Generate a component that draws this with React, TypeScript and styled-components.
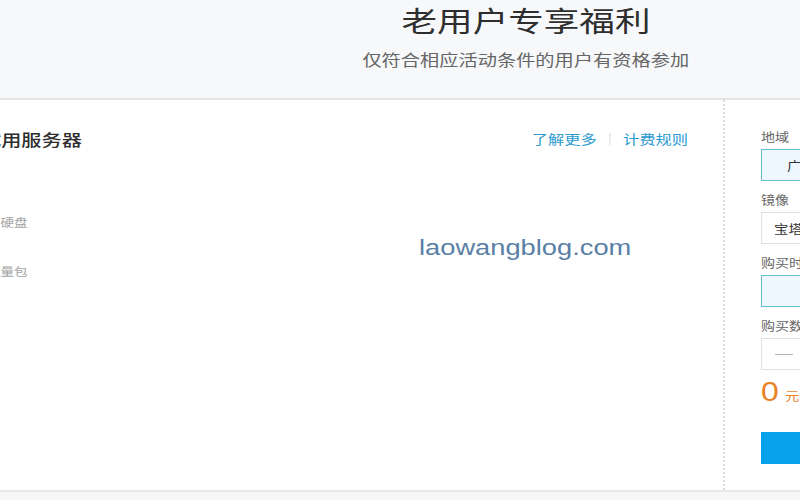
import React from "react";
import styled, { createGlobalStyle } from "styled-components";

const Global = createGlobalStyle`
  html, body { margin: 0; padding: 0; background: #ffffff; }
  body { width: 800px; height: 500px; overflow: hidden; font-family: "Noto Sans CJK SC", "Noto Sans", sans-serif; }
  * { box-sizing: border-box; }
`;

const Page = styled.div`
  width: 800px;
  height: 500px;
  overflow: hidden;
  display: flex;
  flex-direction: column;
  position: relative;
`;

const Header = styled.header`
  height: 100px;
  flex: none;
  background: #f7f8fa;
  border-bottom: 2px solid #e4e4e4;
  display: flex;
  flex-direction: column;
  align-items: center;
  padding-left: 252px;
  padding-top: 1px;
`;

const Title = styled.h1`
  margin: 0;
  font-size: 28px;
  line-height: 38px;
  font-weight: 400;
  color: #2e2e2e;
  transform: scaleX(1.27);
  transform-origin: center;
`;

const Subtitle = styled.p`
  margin: 9px 0 0;
  font-size: 15.5px;
  line-height: 22px;
  color: #666666;
  transform: scaleX(1.24);
  transform-origin: center;
`;

const Main = styled.main`
  flex: 1;
  display: flex;
  min-height: 0;
`;

const LeftPane = styled.section`
  width: 725px;
  flex: none;
  border-right: 2px dotted #dcdcdc;
  padding: 29px 35px 0 0;
  position: relative;
`;

const PaneHead = styled.div`
  display: flex;
  justify-content: space-between;
  align-items: center;
  height: 20px;
`;

const PaneTitle = styled.h2`
  margin: 0 0 0 -19px;
  font-size: 16px;
  line-height: 20px;
  font-weight: 500;
  color: #2e2e2e;
  transform: scaleX(1.26);
  transform-origin: left;
`;

const Links = styled.div`
  display: flex;
  align-items: center;
  gap: 10px;
  transform: scaleX(1.25);
  transform-origin: right;
`;

const LinkText = styled.a`
  font-size: 13px;
  line-height: 20px;
  color: #2a9ad0;
  text-decoration: none;
`;

const Sep = styled.span`
  width: 1px;
  height: 12px;
  background: #e2e2e2;
`;

const ItemList = styled.ul`
  list-style: none;
  margin: 63px 0 0;
  padding: 0;
  display: flex;
  flex-direction: column;
  gap: 29px;
`;

const Item = styled.li`
  margin-left: -13px;
  font-size: 11px;
  line-height: 20px;
  color: #a3a3a3;
  transform: scaleX(1.23);
  transform-origin: left;
`;

const Watermark = styled.div`
  position: absolute;
  left: 419px;
  top: 134px;
  font-family: "Liberation Sans", Arial, sans-serif;
  font-size: 22px;
  line-height: 28px;
  color: #5a7fa6;
  transform: scaleX(1.24);
  transform-origin: left;
`;

const RightPane = styled.aside`
  flex: none;
  width: 260px;
  padding: 27px 0 0 36px;
  display: flex;
  flex-direction: column;
  gap: 9px;
`;

const Field = styled.div`
  display: flex;
  flex-direction: column;
  align-items: flex-start;
  gap: 2px;
`;

const Label = styled.label`
  font-size: 12px;
  line-height: 20px;
  color: #666666;
  transform: scaleX(1.17);
  transform-origin: left;
`;

const Box = styled.div<{ $active?: boolean; $indent?: number }>`
  height: 32px;
  width: 220px;
  display: flex;
  align-items: center;
  padding-left: ${(p) => p.$indent ?? 12}px;
  border: 1px solid ${(p) => (p.$active ? "#63c0cf" : "#e1e1e1")};
  background: ${(p) => (p.$active ? "#eef7fd" : "#ffffff")};
  font-size: 12px;
  color: #333333;
`;

const BoxText = styled.span`
  transform: scaleX(1.2);
  transform-origin: left;
`;

const Minus = styled.span`
  width: 18px;
  height: 1px;
  background: #b5b5b5;
`;

const Price = styled.div`
  margin-top: -4px;
  display: flex;
  align-items: baseline;
  gap: 9px;
  color: #e9821f;
  height: 34px;
`;

const Amount = styled.span`
  font-family: "Liberation Sans", Arial, sans-serif;
  font-size: 27px;
  line-height: 34px;
  transform: scaleX(1.18);
  transform-origin: left;
`;

const Unit = styled.span`
  font-size: 12px;
  transform: scaleX(1.2);
  transform-origin: left;
`;

const BuyButton = styled.button`
  margin-top: 14px;
  height: 32px;
  width: 220px;
  border: none;
  background: #06a1ea;
  color: #ffffff;
  font-size: 14px;
  text-align: left;
  padding: 0;
`;

const Footer = styled.footer`
  height: 10px;
  flex: none;
  border-top: 2px solid #e8e8e8;
  background: #f7f7f7;
`;

export default function App() {
  return (
    <Page>
      <Global />
      <Header>
        <Title>老用户专享福利</Title>
        <Subtitle>仅符合相应活动条件的用户有资格参加</Subtitle>
      </Header>
      <Main>
        <LeftPane>
          <PaneHead>
            <PaneTitle>试用服务器</PaneTitle>
            <Links>
              <LinkText href="#">了解更多</LinkText>
              <Sep />
              <LinkText href="#">计费规则</LinkText>
            </Links>
          </PaneHead>
          <ItemList>
            <Item>云硬盘</Item>
            <Item>流量包</Item>
          </ItemList>
          <Watermark>laowangblog.com</Watermark>
        </LeftPane>
        <RightPane>
          <Field>
            <Label>地域</Label>
            <Box $active $indent={25}>
              <BoxText>广州</BoxText>
            </Box>
          </Field>
          <Field>
            <Label>镜像</Label>
            <Box $indent={12}>
              <BoxText>宝塔</BoxText>
            </Box>
          </Field>
          <Field>
            <Label>购买时长</Label>
            <Box $active />
          </Field>
          <Field>
            <Label>购买数量</Label>
            <Box $indent={13}>
              <Minus />
            </Box>
          </Field>
          <Price>
            <Amount>0</Amount>
            <Unit>元</Unit>
          </Price>
          <BuyButton type="button"> </BuyButton>
        </RightPane>
      </Main>
      <Footer />
    </Page>
  );
}
